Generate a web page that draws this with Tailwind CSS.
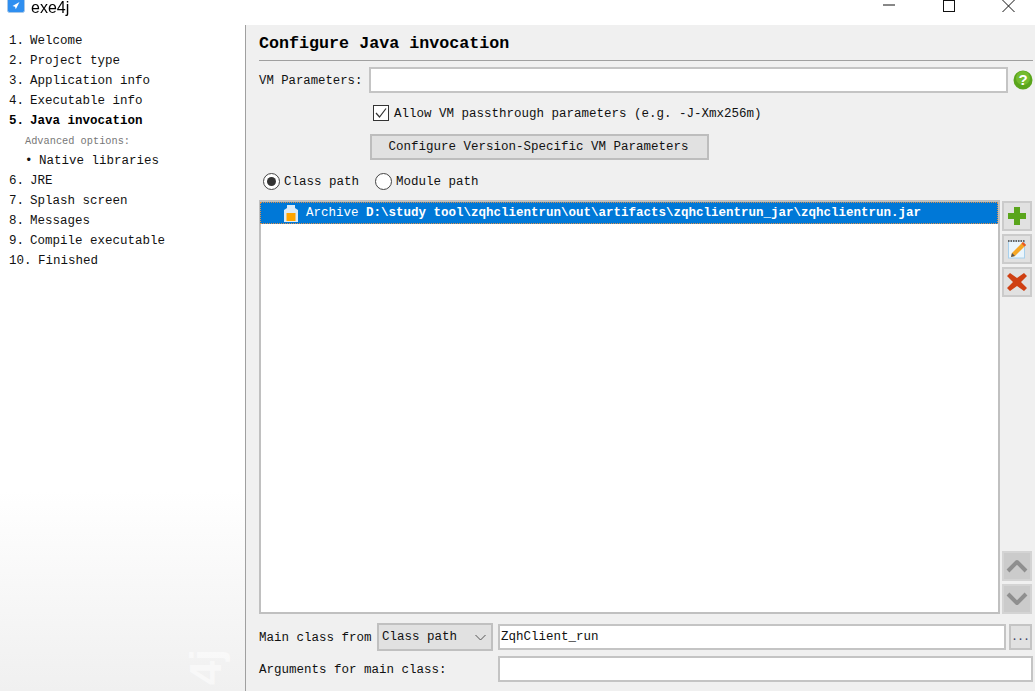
<!doctype html>
<html><head><meta charset="utf-8"><script src="https://cdn.jsdelivr.net/npm/@tailwindcss/browser@4"></script></head>
<body class="m-0 overflow-hidden bg-white">
<div class="w-[1035px] h-[691px] flex flex-col overflow-hidden font-['Liberation_Mono',monospace] text-[12.5px] text-[#111] blur-[0.35px]">
  <!-- title bar -->
  <div class="h-[25px] shrink-0 bg-white flex items-start relative">
    <svg class="ml-[7px] mt-0 w-[18px] h-[13px]" viewBox="0 0 18 13"><rect x="0.5" y="-4" width="17" height="16.5" rx="2" fill="#2f8ff0" stroke="#a9c8e8"/><path d="M12.500 2 5.500 6l2.500.8.8 2.500z" fill="#fff"/></svg>
    <span class="ml-[6px] font-['Liberation_Sans',sans-serif] text-[16px] leading-[15px] text-black">exe4j</span>
    <div class="ml-auto flex items-start">
      <svg class="w-[12px] h-[12px] mr-[48px]" viewBox="0 0 12 12"><path d="M0 5h12" stroke="#111" stroke-width="1"/></svg>
      <svg class="w-[12px] h-[12px] mr-[47px]" viewBox="0 0 12 12"><rect x="0.500" y="0.500" width="11" height="11" fill="none" stroke="#111"/></svg>
      <svg class="w-[13px] h-[13px] mr-[20px]" viewBox="0 0 13 13"><path d="M.5 0 12.500 12M12.500 0 .5 12" stroke="#111"/></svg>
    </div>
  </div>
  <div class="flex-1 flex min-h-0">
    <!-- sidebar -->
    <aside class="relative w-[246px] shrink-0 border-r border-[#a0a0a0] bg-gradient-to-b from-white from-[70%] to-[#f0f0f0] pt-[6px] overflow-hidden">
      <ol class="leading-[20px]">
        <li class="flex"><span class="w-[30px] pl-[9px]">1.</span>Welcome</li>
        <li class="flex"><span class="w-[30px] pl-[9px]">2.</span>Project type</li>
        <li class="flex"><span class="w-[30px] pl-[9px]">3.</span>Application info</li>
        <li class="flex"><span class="w-[30px] pl-[9px]">4.</span>Executable info</li>
        <li class="flex font-bold text-black"><span class="w-[30px] pl-[9px]">5.</span>Java invocation</li>
        <li class="pl-[25px] text-[10.3px] text-[#777]">Advanced options:</li>
        <li class="flex"><span class="w-[39px] pl-[25px]">•</span>Native libraries</li>
        <li class="flex"><span class="w-[30px] pl-[9px]">6.</span>JRE</li>
        <li class="flex"><span class="w-[30px] pl-[9px]">7.</span>Splash screen</li>
        <li class="flex"><span class="w-[30px] pl-[9px]">8.</span>Messages</li>
        <li class="flex"><span class="w-[30px] pl-[9px]">9.</span>Compile executable</li>
        <li class="flex"><span class="w-[38px] pl-[9px]">10.</span>Finished</li>
      </ol>
      <span class="absolute left-[188px] top-[620px] -rotate-90 font-['Liberation_Sans',sans-serif] font-bold text-[44px] leading-[44px] text-white/50">4j</span>
    </aside>
    <!-- main -->
    <main class="flex-1 bg-[#f0f0f0] pl-[13px] pr-[2px] flex flex-col min-w-0">
      <h1 class="h-[36px] shrink-0 border-b border-[#a0a0a0] text-[16.7px] font-bold leading-[37px] text-black">Configure Java invocation</h1>
      <div class="mt-[6px] h-[26px] flex items-center shrink-0">
        <span class="w-[110px] pt-[2px] text-[12.3px]">VM Parameters:</span>
        <div class="w-[639px] h-[26px] bg-white border-2 border-[#c4c4c4]"></div>
        <svg class="ml-[5px] w-[20px] h-[20px]" viewBox="0 0 20 20"><circle cx="10" cy="10" r="9.500" fill="#5aa51c"/><circle cx="10" cy="8" r="7" fill="#74bb2e"/><text x="10" y="15" text-anchor="middle" font-family="Liberation Sans" font-weight="700" font-size="15" fill="#fff">?</text></svg>
      </div>
      <label class="mt-[10px] ml-[114px] h-[20px] flex items-center shrink-0">
        <span class="w-[16px] h-[16px] border border-[#333] bg-white flex items-center justify-center"><svg class="w-[12px] h-[12px]" viewBox="0 0 12 12"><path d="M1 6l3.500 4L11 1.500" fill="none" stroke="#333" stroke-width="1.200"/></svg></span>
        <span class="ml-[5px] pt-[2px]">Allow VM passthrough parameters (e.g. -J-Xmx256m)</span>
      </label>
      <div class="mt-[11px] ml-[111px] w-[339px] h-[26px] shrink-0 bg-[#e1e1e1] border-2 border-[#bdbdbd] flex items-center justify-center pr-[2px]">Configure Version-Specific VM Parameters</div>
      <div class="mt-[11px] ml-[4px] h-[20px] flex items-center shrink-0">
        <span class="w-[17px] h-[17px] rounded-full border border-[#444] bg-white flex items-center justify-center"><span class="w-[9px] h-[9px] rounded-full bg-[#333]"></span></span>
        <span class="ml-[4px] pt-[2px]">Class path</span>
        <span class="ml-[16px] w-[17px] h-[17px] rounded-full border border-[#444] bg-white"></span>
        <span class="ml-[4px] pt-[2px]">Module path</span>
      </div>
      <!-- list + side buttons -->
      <div class="mt-[9px] flex shrink-0">
        <div class="w-[741px] h-[414px] bg-white border-2 border-[#c0c0c0]">
          <div class="-ml-px h-[22px] bg-[#0078d7] border border-dotted border-[#e0914a] flex items-center pl-[22px] text-white">
            <svg class="w-[16px] h-[19px] mr-[7px] shrink-0" viewBox="0 0 16 19"><path d="M4 1h8v3l3 2v12H1V6l3-2z" fill="#dcebf7"/><rect x="3.500" y="9" width="9" height="8" fill="#ffa500"/></svg>
            <span class="whitespace-nowrap">Archive <b>D:\study tool\zqhclientrun\out\artifacts\zqhclientrun_jar\zqhclientrun.jar</b></span>
          </div>
        </div>
        <div class="ml-[2px] w-[30px] flex flex-col pt-[1px] h-[414px]">
          <div class="w-[30px] h-[30px] bg-[#e1e1e1] border-2 border-[#cbcbcb] flex items-center justify-center"><svg class="w-[20px] h-[20px]" viewBox="0 0 20 20"><path d="M7 1h6v6h6v6h-6v6H7v-6H1V7h6z" fill="#5aa51c"/></svg></div>
          <div class="mt-[3px] w-[30px] h-[30px] bg-[#e1e1e1] border-2 border-[#cbcbcb] flex items-center justify-center"><svg class="w-[22px] h-[22px]" viewBox="0 0 22 22"><rect x="2.500" y="3" width="16" height="17" fill="#eaf5fc" stroke="#a8d0ec"/><path d="M2 3h17" stroke="#666" stroke-width="2" stroke-dasharray="1.500 1"/><path d="M5 19l1-4L17 4l3 3L9 18z" fill="#f5a623"/><path d="M17 4l3 3-1.500 1.500-3-3z" fill="#e8562a"/><path d="M5 19l1-4 3 3z" fill="#555"/></svg></div>
          <div class="mt-[3px] w-[30px] h-[30px] bg-[#e1e1e1] border-2 border-[#cbcbcb] flex items-center justify-center"><svg class="w-[22px] h-[22px]" viewBox="0 0 22 22"><path d="M4 2l7 5 7-5 3 3-6 6 6 6-3 3-7-5-7 5-3-3 6-6-6-6z" fill="#cf4013"/></svg></div>
          <div class="mt-auto w-[30px] h-[30px] bg-[#cbcbcb] border-2 border-[#d4d4d4] flex items-center justify-center"><svg class="w-[22px] h-[14px]" viewBox="0 0 22 14"><path d="M2 12l9-9 9 9" fill="none" stroke="#8f8f8f" stroke-width="4" stroke-linejoin="round"/></svg></div>
          <div class="mt-[3px] w-[30px] h-[30px] bg-[#cbcbcb] border-2 border-[#d4d4d4] flex items-center justify-center"><svg class="w-[22px] h-[14px]" viewBox="0 0 22 14"><path d="M2 2l9 9 9-9" fill="none" stroke="#8f8f8f" stroke-width="4" stroke-linejoin="round"/></svg></div>
        </div>
      </div>
      <div class="mt-[10px] h-[26px] flex items-center shrink-0">
        <span class="w-[118px] whitespace-nowrap pt-[2px]">Main class from</span>
        <div class="w-[116px] h-[28px] bg-[#e1e1e1] border-2 border-[#c0c0c0] flex items-center pl-[3px] pt-[1px]">Class path
          <svg class="ml-auto mr-[5px] w-[11px] h-[7px]" viewBox="0 0 11 7"><path d="M.5 1l5 5 5-5" fill="none" stroke="#555"/></svg>
        </div>
        <div class="ml-[5px] w-[508px] h-[26px] bg-white border-2 border-[#c4c4c4] flex items-center pl-[1px] pt-[1px]">ZqhClient_run</div>
        <div class="ml-[3px] w-[23px] h-[26px] bg-[#e1e1e1] border-2 border-[#c4c4c4] flex items-center justify-center text-[#446] font-bold text-[10px]">...</div>
      </div>
      <div class="mt-[6px] h-[26px] flex items-center shrink-0">
        <span class="w-[239px] whitespace-nowrap pt-[2px]">Arguments for main class:</span>
        <div class="w-[536px] h-[26px] bg-white border-2 border-[#c4c4c4]"></div>
      </div>
    </main>
  </div>
</div>
</body></html>
